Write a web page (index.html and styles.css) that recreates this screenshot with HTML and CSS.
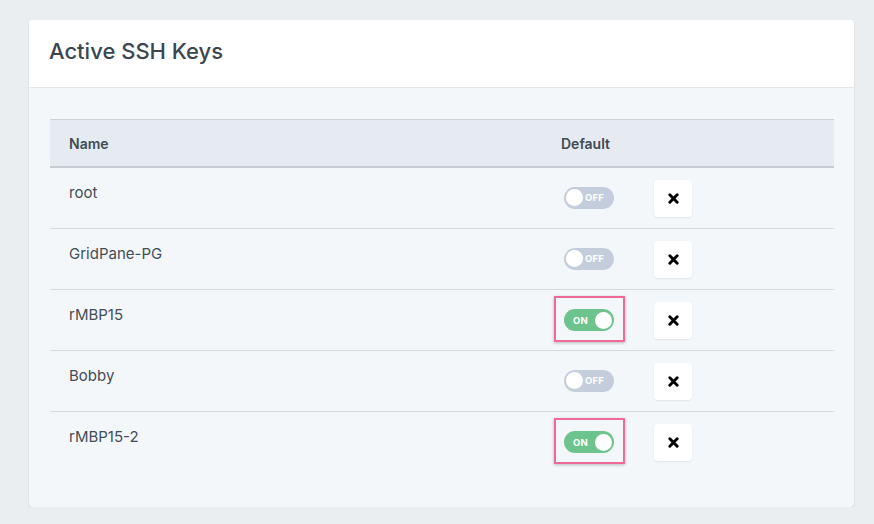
FILE: index.html
```html
<!DOCTYPE html>
<html>
<head>
<meta charset="utf-8">
<link rel="stylesheet" href="styles.css">
</head>
<body>
<div class="card">
  <div class="card-header"><h1 class="title">Active SSH Keys</h1></div>
  <div class="card-body">
    <table class="keys">
      <thead>
        <tr><th class="c-name">Name</th><th class="c-def">Default</th><th class="c-act"></th></tr>
      </thead>
      <tbody>
        <tr>
          <td class="c-name">root</td>
          <td class="c-def"><span class="toggle off"><span class="knob"></span><span class="lbl">OFF</span></span></td>
          <td class="c-act"><button class="del"><svg viewBox="0 0 12 12" width="11" height="11"><path d="M2 2L10 10M10 2L2 10" stroke="#000" stroke-width="3.2" stroke-linecap="round"/></svg></button></td>
        </tr>
        <tr>
          <td class="c-name">GridPane-PG</td>
          <td class="c-def"><span class="toggle off"><span class="knob"></span><span class="lbl">OFF</span></span></td>
          <td class="c-act"><button class="del"><svg viewBox="0 0 12 12" width="11" height="11"><path d="M2 2L10 10M10 2L2 10" stroke="#000" stroke-width="3.2" stroke-linecap="round"/></svg></button></td>
        </tr>
        <tr>
          <td class="c-name">rMBP15</td>
          <td class="c-def"><span class="hl"><span class="toggle on"><span class="lbl">ON</span><span class="knob"></span></span></span></td>
          <td class="c-act"><button class="del"><svg viewBox="0 0 12 12" width="11" height="11"><path d="M2 2L10 10M10 2L2 10" stroke="#000" stroke-width="3.2" stroke-linecap="round"/></svg></button></td>
        </tr>
        <tr>
          <td class="c-name">Bobby</td>
          <td class="c-def"><span class="toggle off"><span class="knob"></span><span class="lbl">OFF</span></span></td>
          <td class="c-act"><button class="del"><svg viewBox="0 0 12 12" width="11" height="11"><path d="M2 2L10 10M10 2L2 10" stroke="#000" stroke-width="3.2" stroke-linecap="round"/></svg></button></td>
        </tr>
        <tr>
          <td class="c-name">rMBP15-2</td>
          <td class="c-def"><span class="hl"><span class="toggle on"><span class="lbl">ON</span><span class="knob"></span></span></span></td>
          <td class="c-act"><button class="del"><svg viewBox="0 0 12 12" width="11" height="11"><path d="M2 2L10 10M10 2L2 10" stroke="#000" stroke-width="3.2" stroke-linecap="round"/></svg></button></td>
        </tr>
      </tbody>
    </table>
  </div>
</div>
</body>
</html>
```
FILE: styles.css
```css
html, body {
  margin: 0;
  padding: 0;
  background: #ebeef1;
  font-family: Inter, "Liberation Sans", Arial, sans-serif;
  color: #3e4a54;
}
.card {
  margin: 20px 0 0 29px;
  width: 825px;
  height: 487px;
  border-radius: 4px;
  background: #f4f7f9;
  box-shadow: 0 1px 2px rgba(0,0,0,0.12);
  overflow: hidden;
}
.card-header {
  background: #fff;
  height: 67px;
  border-bottom: 1px solid #e3e7eb;
  padding: 0 20px;
  display: flex;
  align-items: center;
}
.title {
  margin: -6px 0 0 0;
  font-size: 22px;
  font-weight: 500;
  color: #3b4650;
  letter-spacing: 0;
}
.card-body {
  padding: 31px 20px 0 21px;
}
.keys {
  width: 784px;
  border-collapse: collapse;
}
.keys th {
  background: #e6eaf1;
  border-top: 1px solid #cfd3d8;
  border-bottom: 2px solid #c8ccd1;
  height: 46px;
  padding: 0 0 0 19px;
  text-align: left;
  font-size: 14px;
  font-weight: 600;
  color: #414b55;
}
.keys th.c-def { padding-left: 20px; }
.keys td {
  height: 60px;
  padding: 0 0 0 19px;
  border-bottom: 1px solid #d6dadf;
}
.keys tbody tr:last-child td {
  border-bottom: none;
}
.keys td.c-name {
  vertical-align: top;
  padding-top: 15px;
  font-size: 15px;
  color: #434e58;
  box-sizing: border-box;
}
.c-name { width: 472px; }
.c-def { width: 71px; }
.keys td.c-def { padding-left: 23px; vertical-align: middle; }
.keys td.c-act { vertical-align: middle; }
.toggle {
  position: relative;
  display: flex;
  align-items: center;
  width: 50px;
  height: 22px;
  border-radius: 11px;
  box-sizing: border-box;
  padding: 0 2px;
  margin-top: -1px;
}
.toggle.off { background: #c4cddc; }
.toggle.on { background: #6cc38e; justify-content: space-between; padding-left: 9px; }
.knob {
  width: 17px;
  height: 17px;
  border-radius: 50%;
  background: #fff;
  flex: none;
}
.lbl {
  color: #fff;
  font-size: 9.5px;
  font-weight: 700;
  letter-spacing: 0.2px;
}
.toggle.off .lbl { margin-left: 2px; }
.hl {
  position: relative;
  display: inline-block;
  vertical-align: middle;
}
.hl::after {
  content: "";
  position: absolute;
  left: -10px;
  top: -14px;
  width: 67px;
  height: 42px;
  border: 2px solid #f06a98;
  box-shadow: 0 1px 3px rgba(0,0,0,0.25);
}
.del {
  width: 38px;
  height: 37px;
  border: none;
  background: #fff;
  border-radius: 4px;
  box-shadow: 0 1px 2px rgba(0,0,0,0.08);
  display: flex;
  align-items: center;
  justify-content: center;
  padding: 0;
  margin-top: 1px;
}
```
